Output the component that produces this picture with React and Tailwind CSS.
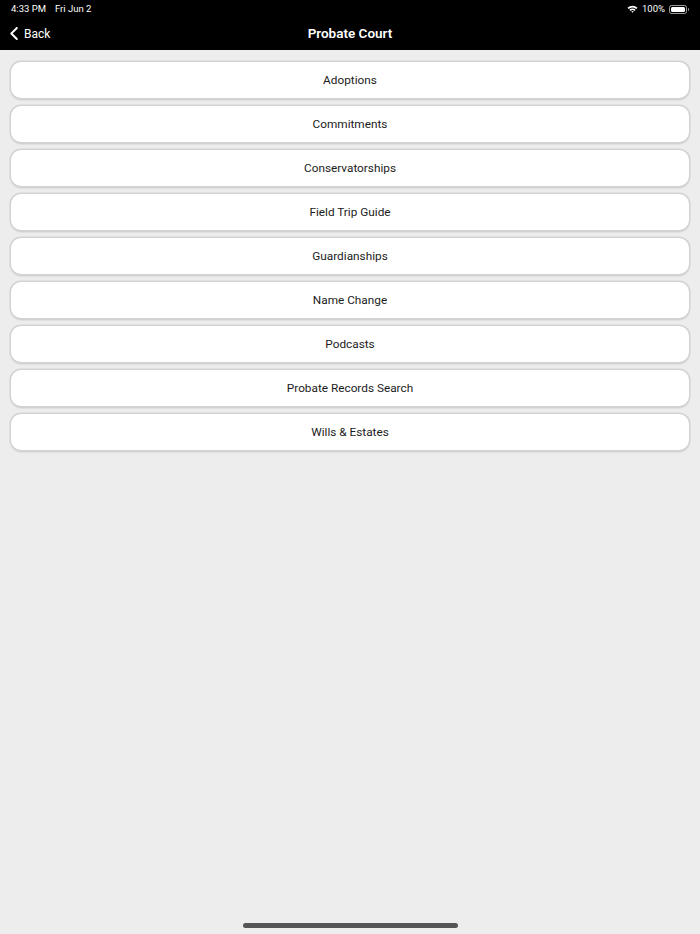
const items = [
  'Adoptions',
  'Commitments',
  'Conservatorships',
  'Field Trip Guide',
  'Guardianships',
  'Name Change',
  'Podcasts',
  'Probate Records Search',
  'Wills & Estates',
];

function StatusBar() {
  return (
    <div className="flex h-[17px] items-center justify-between px-[11px] pt-[1px] text-[9.5px] text-white">
      <div className="flex gap-[9px]">
        <span>4:33 PM</span>
        <span>Fri Jun 2</span>
      </div>
      <div className="flex items-center gap-[4px]">
        <svg width="11" height="8" viewBox="0 0 11 8">
          <path d="M0.5 2.8 A7 7 0 0 1 10.5 2.8 L9.3 4 A5.3 5.3 0 0 0 1.7 4 Z" fill="white" />
          <path d="M2.4 4.7 A4.3 4.3 0 0 1 8.6 4.7 L7.4 5.9 A2.6 2.6 0 0 0 3.6 5.9 Z" fill="white" />
          <path d="M4.3 6.6 A1.7 1.7 0 0 1 6.7 6.6 L5.5 7.8 Z" fill="white" />
        </svg>
        <span>100%</span>
        <div className="flex items-center">
          <div className="h-[9px] w-[18px] rounded-[2.5px] border border-white/60 p-[1px]">
            <div className="h-full w-full rounded-[1.5px] bg-white" />
          </div>
          <div className="ml-[1px] h-[3px] w-[1px] rounded-r bg-white/60" />
        </div>
      </div>
    </div>
  );
}

export default function App() {
  return (
    <div className="flex h-[934px] w-[700px] flex-col bg-[#ededed] font-['Roboto','Liberation_Sans',sans-serif]">
      <div className="h-[50px] bg-black">
        <StatusBar />
        <div className="relative flex h-[33px] items-center justify-center">
          <div className="absolute left-[10px] flex items-center gap-[6px] text-white">
            <svg width="8" height="13" viewBox="0 0 8 13" fill="none">
              <path d="M6.8 1 L1.3 6.5 L6.8 12" stroke="white" strokeWidth="1.9" strokeLinecap="round" strokeLinejoin="round" />
            </svg>
            <span className="text-[12px]">Back</span>
          </div>
          <span className="text-[13.5px] font-semibold text-white">Probate Court</span>
        </div>
      </div>
      <div className="flex flex-1 flex-col gap-[8px] px-[11px] pt-[12px]">
        {items.map((item) => (
          <button
            key={item}
            className="flex h-[36px] items-center justify-center rounded-[10px] bg-white pt-[2px] text-[11.8px] text-[#1c1c1c] shadow-[0_0_0_1.5px_#d3d3d3,0_1.5px_2px_rgba(0,0,0,0.18)]"
          >
            {item}
          </button>
        ))}
      </div>
      <div className="flex h-[20px] justify-center">
        <div className="mt-[9px] h-[5px] w-[215px] rounded-full bg-[#555]" />
      </div>
    </div>
  );
}
